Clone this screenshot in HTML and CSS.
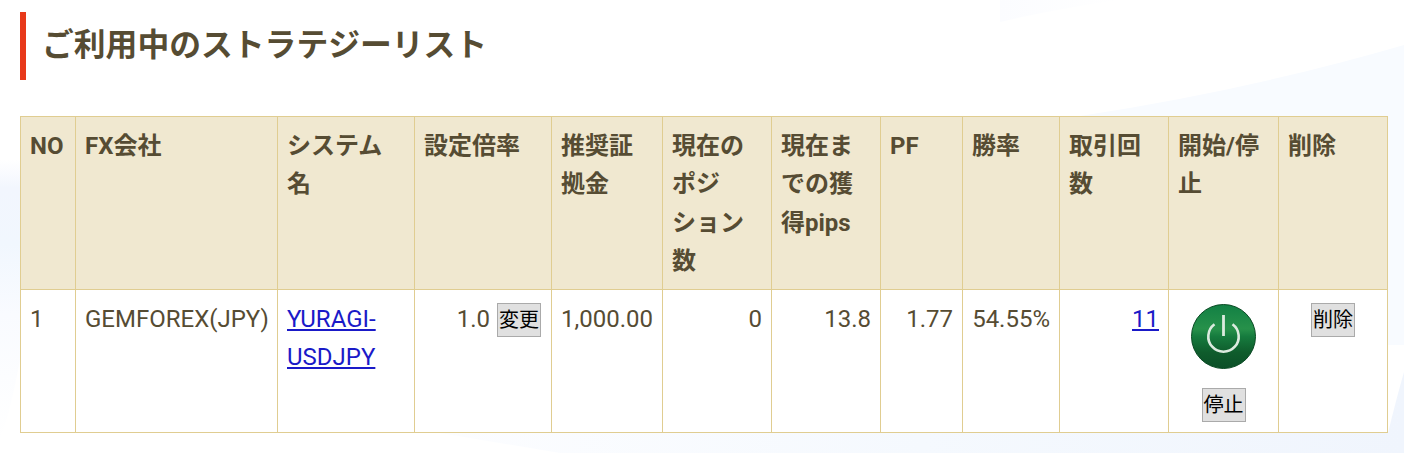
FILE: index.html
```html
<!DOCTYPE html>
<html lang="ja">
<head>
<meta charset="utf-8">
<title>ご利用中のストラテジーリスト</title>
<link rel="stylesheet" href="styles.css">
</head>
<body>
<svg class="backdrop" viewBox="0 0 1404 453" aria-hidden="true">
<defs>
<linearGradient id="lb" x1="0" y1="0" x2="0" y2="1">
<stop offset="0" stop-color="#ffffff"/>
<stop offset="0.1" stop-color="#f2f6fe"/>
<stop offset="0.3" stop-color="#f1f7fe"/>
<stop offset="0.55" stop-color="#f9fbff"/>
<stop offset="1" stop-color="#ffffff"/>
</linearGradient>
<linearGradient id="bb" x1="0" y1="0" x2="1" y2="0">
<stop offset="0" stop-color="#fcfdff"/>
<stop offset="0.5" stop-color="#f5f9fe"/>
<stop offset="1" stop-color="#f0f5fd"/>
</linearGradient>
<linearGradient id="tb" x1="0" y1="0" x2="1" y2="0">
<stop offset="0" stop-color="#fbfcff"/>
<stop offset="1" stop-color="#ffffff"/>
</linearGradient>
</defs>
<path d="M1080 116Q1250 90 1404 45V345H1080Z" fill="#f8fbff"/>
<path d="M1000 22Q1060 8 1120 0H1000Z" fill="url(#tb)"/>
<path d="M0 160H30V300Q15 400 0 440Z" fill="url(#lb)"/>
<path d="M440 433L1388 433Q1396 400 1404 372V453H560Z" fill="url(#bb)"/>
</svg>
<main class="page">
<h2 class="title">ご利用中のストラテジーリスト</h2>
<table class="list">
<colgroup>
<col class="c1"><col class="c2"><col class="c3"><col class="c4"><col class="c5"><col class="c6"><col class="c7"><col class="c8"><col class="c9"><col class="c10"><col class="c11"><col class="c12">
</colgroup>
<thead>
<tr>
<th>NO</th><th>FX会社</th><th>システム名</th><th>設定倍率</th><th>推奨証拠金</th><th>現在のポジ<span class="nb">ション</span>数</th><th>現在までの獲得pips</th><th>PF</th><th>勝率</th><th>取引回数</th><th>開始/停止</th><th>削除</th>
</tr>
</thead>
<tbody>
<tr>
<td>1</td>
<td>GEMFOREX(JPY)</td>
<td><a href="#">YURAGI-USDJPY</a></td>
<td class="num">1.0 <button class="btn change" type="button">変更</button></td>
<td class="num">1,000.00</td>
<td class="num">0</td>
<td class="num">13.8</td>
<td class="num">1.77</td>
<td class="num">54.55%</td>
<td class="num"><a href="#">11</a></td>
<td class="mid">
<svg class="power" viewBox="0 0 65 65" aria-hidden="true">
<defs>
<linearGradient id="pg" x1="0" y1="0" x2="0" y2="1">
<stop offset="0" stop-color="#128044"/>
<stop offset="0.38" stop-color="#27914a"/>
<stop offset="0.5" stop-color="#167b3e"/>
<stop offset="0.75" stop-color="#0f5c2c"/>
<stop offset="1" stop-color="#0b4f27"/>
</linearGradient>
</defs>
<circle cx="32.5" cy="32.5" r="32" fill="url(#pg)" stroke="#0a4a24" stroke-width="1"/>
<path d="M23.5 20.3a15.2 15.2 0 1 0 18 0" fill="none" stroke="#dcebdf" stroke-width="2.6"/>
<path d="M32.5 11v21" fill="none" stroke="#dcebdf" stroke-width="2.8"/>
</svg>
<button class="btn stop" type="button">停止</button>
</td>
<td class="mid"><button class="btn" type="button">削除</button></td>
</tr>
</tbody>
</table>
</main>
</body>
</html>
```
FILE: styles.css
```css
html, body {
  margin: 0;
  height: 453px;
  overflow: hidden;
}
body {
  font-family: Roboto, "Noto Sans CJK JP", sans-serif;
  font-size: 24px;
  line-height: 38.4px;
  color: #564c33;
  background-color: #fff;
}
.backdrop {
  position: absolute;
  top: 0;
  left: 0;
  z-index: -1;
  width: 1404px;
  height: 453px;
}
.page {
  padding: 12px 16px 0 20px;
}
.title {
  margin: 0 0 36px;
  height: 68px;
  padding-left: 16px;
  border-left: 6px solid #e8391a;
  font-size: 31.8px;
  line-height: 66px;
  font-weight: 700;
  color: #564c33;
}
.list {
  width: 1367px;
  table-layout: fixed;
  border-collapse: collapse;
  background: #fff;
}
.c1 { width: 55px; }
.c2 { width: 202px; }
.c3 { width: 137px; }
.c4 { width: 137px; }
.c5 { width: 111px; }
.c6 { width: 109px; }
.c7 { width: 109px; }
.c8 { width: 82px; }
.c9 { width: 97px; }
.c10 { width: 109px; }
.c11 { width: 110px; }
.c12 { width: 109px; }
th, td {
  border: 1px solid #e0cd91;
  padding: 10px 9px;
  vertical-align: top;
  text-align: left;
}
th {
  padding-bottom: 8px;
  background: #f0e8d0;
  font-weight: 700;
}
.nb { white-space: nowrap; }
.num { text-align: right; }
.mid { text-align: center; }
a { color: #1a1ac8; }
.btn {
  display: inline-block;
  width: 44px;
  height: 34px;
  margin: 3px 0 0;
  padding: 0 0 2px;
  border: 1px solid #aaa;
  background: #e0e0e0;
  color: #000;
  font-family: "Noto Sans CJK JP", sans-serif;
  font-size: 20px;
  line-height: 28px;
  vertical-align: top;
}
.change { margin: 3px 1px 0 1px; }
.power {
  display: block;
  width: 65px;
  height: 65px;
  margin: 4px auto 0;
}
.mid .stop {
  display: block;
  margin: 19px auto 0;
}
```
